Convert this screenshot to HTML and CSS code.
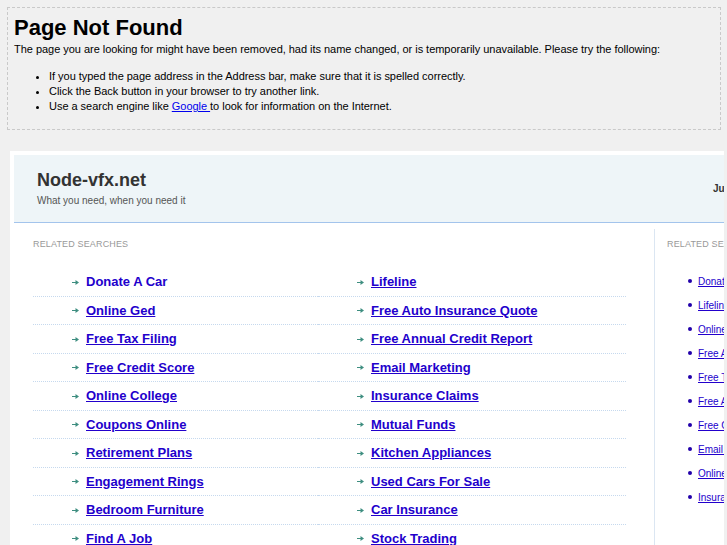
FILE: index.html
```html
<!DOCTYPE html>
<html>
<head>
<meta charset="utf-8">
<title>Page Not Found</title>
<link rel="stylesheet" href="styles.css">
</head>
<body>
<div class="notfound">
  <h1 class="nf-title">Page Not Found</h1>
  <p class="nf-text">The page you are looking for might have been removed, had its name changed, or is temporarily unavailable. Please try the following:</p>
  <ul class="nf-list">
    <li>If you typed the page address in the Address bar, make sure that it is spelled correctly.</li>
    <li>Click the Back button in your browser to try another link.</li>
    <li>Use a search engine like <a class="nf-link" href="#">Google </a> to look for information on the Internet.</li>
  </ul>
</div>

<div class="site">
 <div class="site-inner">
  <div class="header">
    <div class="brand">
      <div class="brand-name">Node-vfx.net</div>
      <div class="brand-tag">What you need, when you need it</div>
    </div>
    <div class="header-date">June 14, 2011</div>
  </div>
  <div class="content">
    <div class="main">
      <div class="section-title">Related Searches</div>
      <ul class="results">
        <li class="result"><svg class="arrow" width="7" height="7" viewBox="0 0 7 7"><path d="M0 3h4v1H0z M3.5 1L7 3.5 3.5 6z" fill="#3e8e80"/></svg><a class="result-link first" href="#">Donate A Car</a></li>
        <li class="result"><svg class="arrow" width="7" height="7" viewBox="0 0 7 7"><path d="M0 3h4v1H0z M3.5 1L7 3.5 3.5 6z" fill="#3e8e80"/></svg><a class="result-link" href="#">Lifeline</a></li>
        <li class="result"><svg class="arrow" width="7" height="7" viewBox="0 0 7 7"><path d="M0 3h4v1H0z M3.5 1L7 3.5 3.5 6z" fill="#3e8e80"/></svg><a class="result-link" href="#">Online Ged</a></li>
        <li class="result"><svg class="arrow" width="7" height="7" viewBox="0 0 7 7"><path d="M0 3h4v1H0z M3.5 1L7 3.5 3.5 6z" fill="#3e8e80"/></svg><a class="result-link" href="#">Free Auto Insurance Quote</a></li>
        <li class="result"><svg class="arrow" width="7" height="7" viewBox="0 0 7 7"><path d="M0 3h4v1H0z M3.5 1L7 3.5 3.5 6z" fill="#3e8e80"/></svg><a class="result-link" href="#">Free Tax Filing</a></li>
        <li class="result"><svg class="arrow" width="7" height="7" viewBox="0 0 7 7"><path d="M0 3h4v1H0z M3.5 1L7 3.5 3.5 6z" fill="#3e8e80"/></svg><a class="result-link" href="#">Free Annual Credit Report</a></li>
        <li class="result"><svg class="arrow" width="7" height="7" viewBox="0 0 7 7"><path d="M0 3h4v1H0z M3.5 1L7 3.5 3.5 6z" fill="#3e8e80"/></svg><a class="result-link" href="#">Free Credit Score</a></li>
        <li class="result"><svg class="arrow" width="7" height="7" viewBox="0 0 7 7"><path d="M0 3h4v1H0z M3.5 1L7 3.5 3.5 6z" fill="#3e8e80"/></svg><a class="result-link" href="#">Email Marketing</a></li>
        <li class="result"><svg class="arrow" width="7" height="7" viewBox="0 0 7 7"><path d="M0 3h4v1H0z M3.5 1L7 3.5 3.5 6z" fill="#3e8e80"/></svg><a class="result-link" href="#">Online College</a></li>
        <li class="result"><svg class="arrow" width="7" height="7" viewBox="0 0 7 7"><path d="M0 3h4v1H0z M3.5 1L7 3.5 3.5 6z" fill="#3e8e80"/></svg><a class="result-link" href="#">Insurance Claims</a></li>
        <li class="result"><svg class="arrow" width="7" height="7" viewBox="0 0 7 7"><path d="M0 3h4v1H0z M3.5 1L7 3.5 3.5 6z" fill="#3e8e80"/></svg><a class="result-link" href="#">Coupons Online</a></li>
        <li class="result"><svg class="arrow" width="7" height="7" viewBox="0 0 7 7"><path d="M0 3h4v1H0z M3.5 1L7 3.5 3.5 6z" fill="#3e8e80"/></svg><a class="result-link" href="#">Mutual Funds</a></li>
        <li class="result"><svg class="arrow" width="7" height="7" viewBox="0 0 7 7"><path d="M0 3h4v1H0z M3.5 1L7 3.5 3.5 6z" fill="#3e8e80"/></svg><a class="result-link" href="#">Retirement Plans</a></li>
        <li class="result"><svg class="arrow" width="7" height="7" viewBox="0 0 7 7"><path d="M0 3h4v1H0z M3.5 1L7 3.5 3.5 6z" fill="#3e8e80"/></svg><a class="result-link" href="#">Kitchen Appliances</a></li>
        <li class="result"><svg class="arrow" width="7" height="7" viewBox="0 0 7 7"><path d="M0 3h4v1H0z M3.5 1L7 3.5 3.5 6z" fill="#3e8e80"/></svg><a class="result-link" href="#">Engagement Rings</a></li>
        <li class="result"><svg class="arrow" width="7" height="7" viewBox="0 0 7 7"><path d="M0 3h4v1H0z M3.5 1L7 3.5 3.5 6z" fill="#3e8e80"/></svg><a class="result-link" href="#">Used Cars For Sale</a></li>
        <li class="result"><svg class="arrow" width="7" height="7" viewBox="0 0 7 7"><path d="M0 3h4v1H0z M3.5 1L7 3.5 3.5 6z" fill="#3e8e80"/></svg><a class="result-link" href="#">Bedroom Furniture</a></li>
        <li class="result"><svg class="arrow" width="7" height="7" viewBox="0 0 7 7"><path d="M0 3h4v1H0z M3.5 1L7 3.5 3.5 6z" fill="#3e8e80"/></svg><a class="result-link" href="#">Car Insurance</a></li>
        <li class="result"><svg class="arrow" width="7" height="7" viewBox="0 0 7 7"><path d="M0 3h4v1H0z M3.5 1L7 3.5 3.5 6z" fill="#3e8e80"/></svg><a class="result-link" href="#">Find A Job</a></li>
        <li class="result"><svg class="arrow" width="7" height="7" viewBox="0 0 7 7"><path d="M0 3h4v1H0z M3.5 1L7 3.5 3.5 6z" fill="#3e8e80"/></svg><a class="result-link" href="#">Stock Trading</a></li>
      </ul>
    </div>
    <div class="side">
      <div class="section-title">Related Searches</div>
      <ul class="side-list">
        <li class="side-item"><span class="dot"></span><a class="side-link" href="#">Donate A Car</a></li>
        <li class="side-item"><span class="dot"></span><a class="side-link" href="#">Lifeline</a></li>
        <li class="side-item"><span class="dot"></span><a class="side-link" href="#">Online Ged</a></li>
        <li class="side-item"><span class="dot"></span><a class="side-link" href="#">Free Auto Insurance Quote</a></li>
        <li class="side-item"><span class="dot"></span><a class="side-link" href="#">Free Tax Filing</a></li>
        <li class="side-item"><span class="dot"></span><a class="side-link" href="#">Free Annual Credit Report</a></li>
        <li class="side-item"><span class="dot"></span><a class="side-link" href="#">Free Credit Score</a></li>
        <li class="side-item"><span class="dot"></span><a class="side-link" href="#">Email Marketing</a></li>
        <li class="side-item"><span class="dot"></span><a class="side-link" href="#">Online College</a></li>
        <li class="side-item"><span class="dot"></span><a class="side-link" href="#">Insurance Claims</a></li>
      </ul>
    </div>
  </div>
 </div>
</div>
</body>
</html>
```
FILE: styles.css
```css
html, body {
  overflow: hidden;
}
body {
  margin: 0;
  background: #f0f0f0;
  font-family: "Liberation Sans", Arial, sans-serif;
  color: #000;
}
.notfound {
  margin: 7px 6px 0 7px;
  border: 1px dashed #c9c9c9;
  padding: 7px 6px 15px 6px;
}
.nf-title {
  margin: 0;
  font-size: 22px;
  font-weight: bold;
  line-height: 25px;
  color: #000;
}
.nf-text {
  margin: 2px 0 0;
  font-size: 11px;
  line-height: 15px;
  letter-spacing: -0.03px;
}
.nf-list {
  margin: 12px 0 0;
  padding-left: 35px;
  font-size: 11px;
  line-height: 15px;
  letter-spacing: -0.03px;
}
.nf-link {
  color: #0000ee;
}
.site {
  margin: 21px 0 0 10px;
  width: 710px;
  background: #fff;
  padding: 4px 0 40px 4px;
  overflow: hidden;
}
.site-inner {
  width: 976px;
}
.header {
  display: grid;
  grid-template-columns: 676px auto;
  align-items: center;
  height: 67px;
  padding-left: 23px;
  background: #eef5f8;
  border-bottom: 1px solid #a3c4ec;
}
.brand-name {
  font-size: 18px;
  font-weight: bold;
  color: #333;
  line-height: 21px;
}
.brand-tag {
  font-size: 10px;
  color: #555;
  line-height: 12px;
  margin-top: 4px;
}
.header-date {
  font-size: 10px;
  font-weight: bold;
  color: #333;
  white-space: nowrap;
}
.content {
  display: flex;
  margin-top: 6px;
}
.main {
  width: 640px;
  border-right: 1px solid #dbe6f2;
  padding-top: 10px;
  flex: none;
}
.section-title {
  font-size: 9px;
  line-height: 11px;
  color: #999;
  text-transform: uppercase;
  letter-spacing: 0.15px;
  padding-left: 19px;
}
.side .section-title {
  padding-left: 12px;
}
.results {
  list-style: none;
  margin: 18px 0 0 19px;
  padding: 0;
  width: 593px;
  display: grid;
  grid-template-columns: 285px 308px;
}
.result {
  height: 27.5px;
  border-bottom: 1px dotted #c6d9ee;
  display: flex;
  align-items: center;
  padding-left: 39px;
}
.arrow {
  flex: none;
  margin-right: 7px;
  margin-top: 1px;
}
.result-link {
  font-size: 13px;
  font-weight: bold;
  color: #2200cc;
  text-decoration: underline;
}
.result-link.first {
  text-decoration: none;
}
.side {
  padding-top: 10px;
  flex: 1;
}
.side-list {
  list-style: none;
  margin: 19px 0 0;
  padding: 0 0 0 33px;
}
.side-item {
  display: flex;
  align-items: center;
  height: 24px;
  white-space: nowrap;
}
.dot {
  width: 4px;
  height: 4px;
  border-radius: 50%;
  background: #2200aa;
  margin-right: 6px;
  flex: none;
}
.side-link {
  font-size: 10px;
  color: #2200cc;
  text-decoration: underline;
}
```
